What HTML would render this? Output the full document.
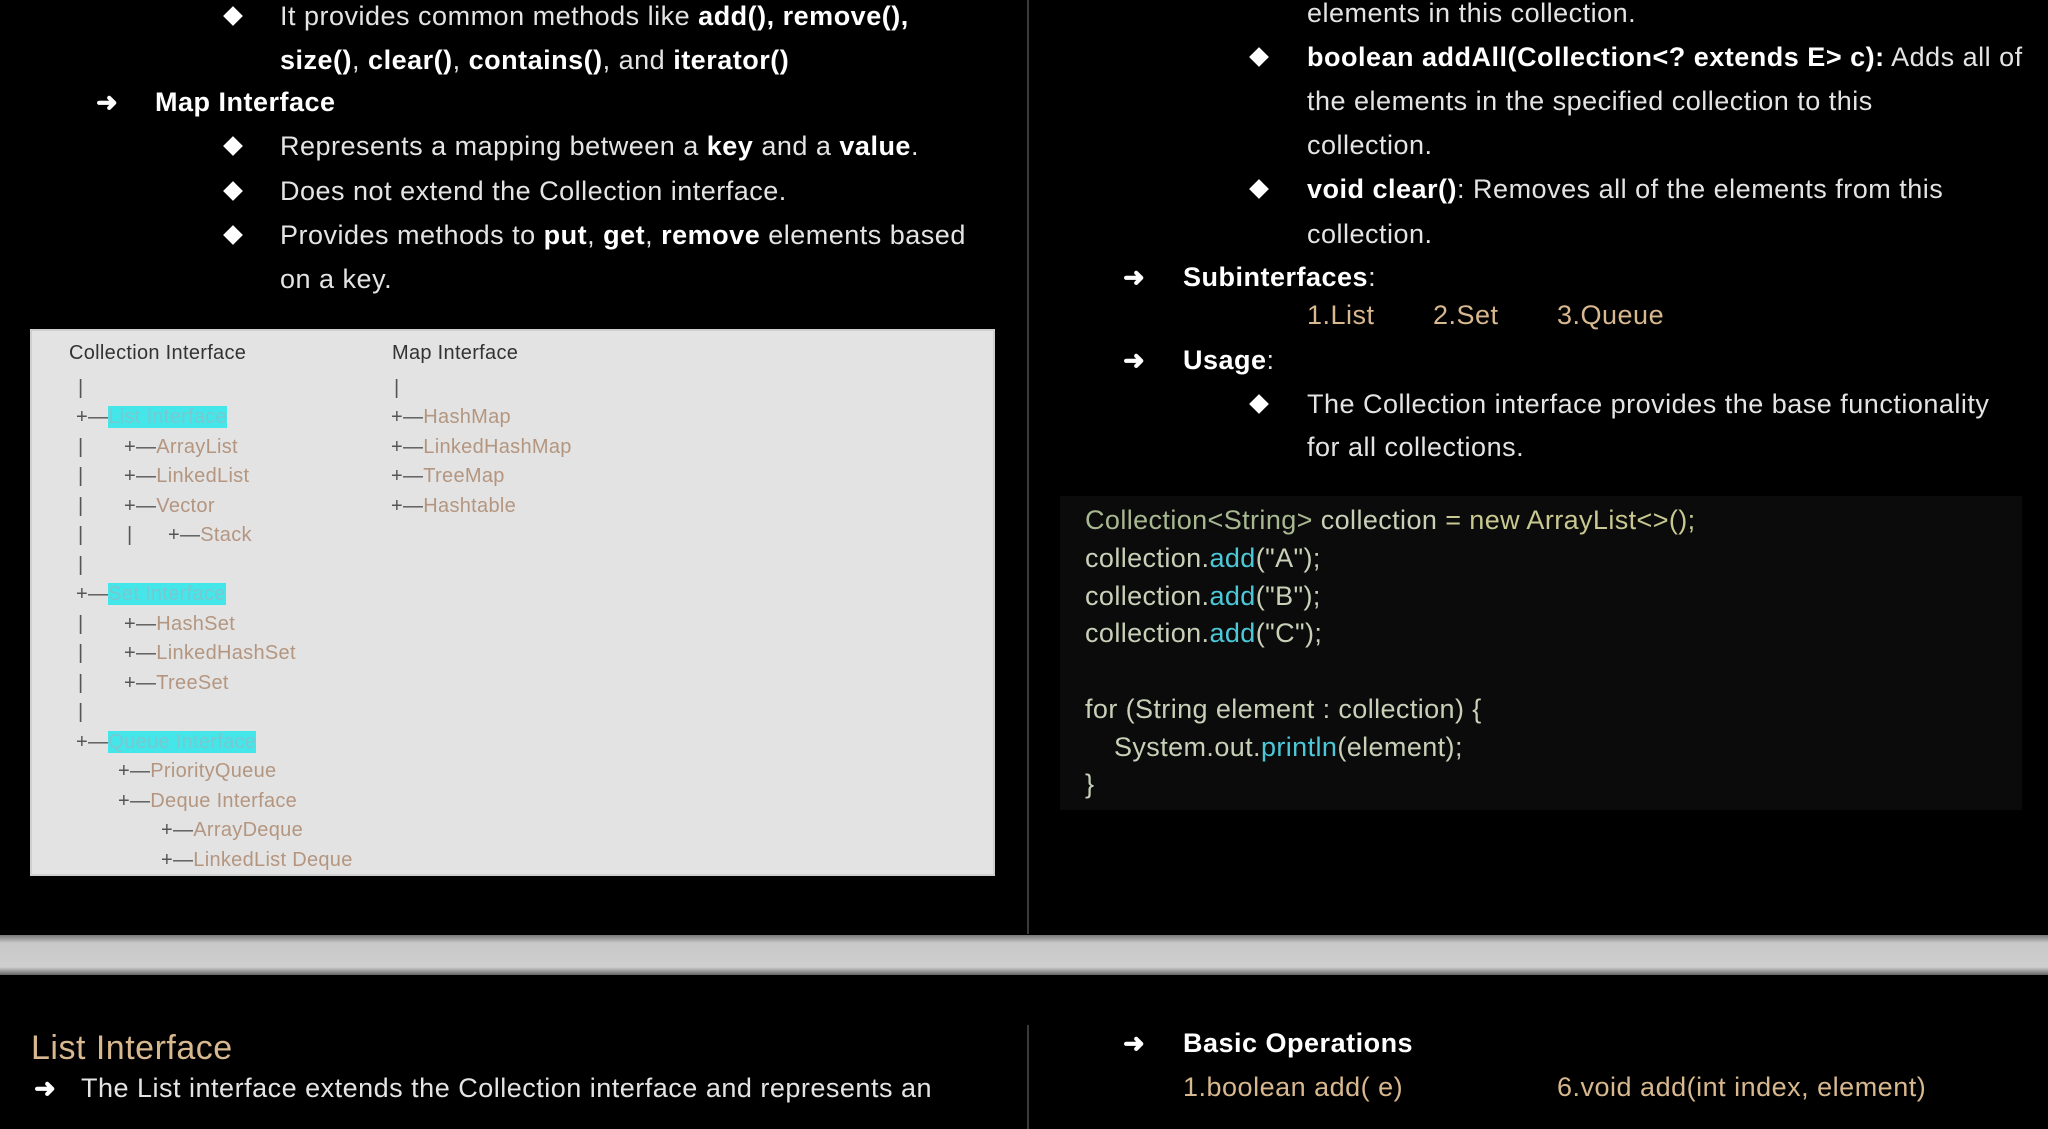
<!DOCTYPE html>
<html><head><meta charset="utf-8"><style>
*{margin:0;padding:0;box-sizing:border-box}
body{width:2048px;height:1129px;background:#000;overflow:hidden;position:relative;font-family:"Liberation Sans",sans-serif;color:#e4e4e4}
.t{position:absolute;font-size:27px;line-height:30px;white-space:nowrap;letter-spacing:0.5px}
b{color:#fff}
.d{position:absolute;width:14px;height:14px;background:#fff;transform:rotate(45deg)}
.a{position:absolute;font-size:26px;line-height:30px;color:#fff;font-weight:bold}
.tan{color:#d8b88e}
.tr{position:absolute;font-size:20px;line-height:22px;color:#b49680;white-space:nowrap;letter-spacing:0.3px}
.bar{color:#555}
.cy{background:#45e6ea;color:#78c8d0}
.c{position:absolute;font-size:27px;line-height:30px;white-space:nowrap;color:#c8d0b8;letter-spacing:0.4px}
</style></head><body>
<div class="d" style="left:226px;top:9px"></div>
<div class="t" style="left:280px;top:1px">It provides common methods like <b>add(), remove(),</b></div>
<div class="t" style="left:280px;top:45px"><b>size()</b>, <b>clear()</b>, <b>contains()</b>, and <b>iterator()</b></div>
<div class="a" style="left:96px;top:87px">➜</div>
<div class="t" style="left:155px;top:87px"><b>Map Interface</b></div>
<div class="d" style="left:226px;top:139px"></div>
<div class="t" style="left:280px;top:131px">Represents a mapping between a <b>key</b> and a <b>value</b>.</div>
<div class="d" style="left:226px;top:184px"></div>
<div class="t" style="left:280px;top:176px">Does not extend the Collection interface.</div>
<div class="d" style="left:226px;top:228px"></div>
<div class="t" style="left:280px;top:220px">Provides methods to <b>put</b>, <b>get</b>, <b>remove</b> elements based</div>
<div class="t" style="left:280px;top:264px">on a key.</div>

<div style="position:absolute;left:30px;top:329px;width:965px;height:547px;background:#e3e3e3;border:2px solid #cfcfcf"></div>
<div class="tr" style="left:69px;top:342px;color:#333">Collection Interface</div>
<div class="tr" style="left:392px;top:342px;color:#333">Map Interface</div>
<div class="tr bar" style="left:78px;top:377px">|</div>
<div class="tr" style="left:76px;top:406px"><span class="bar">+—</span><span class="cy">List Interface</span></div>
<div class="tr bar" style="left:78px;top:436px">|</div><div class="tr" style="left:124px;top:436px"><span class="bar">+—</span>ArrayList</div>
<div class="tr bar" style="left:78px;top:465px">|</div><div class="tr" style="left:124px;top:465px"><span class="bar">+—</span>LinkedList</div>
<div class="tr bar" style="left:78px;top:495px">|</div><div class="tr" style="left:124px;top:495px"><span class="bar">+—</span>Vector</div>
<div class="tr bar" style="left:78px;top:524px">|</div><div class="tr bar" style="left:127px;top:524px">|</div><div class="tr" style="left:168px;top:524px"><span class="bar">+—</span>Stack</div>
<div class="tr bar" style="left:78px;top:554px">|</div>
<div class="tr" style="left:76px;top:583px"><span class="bar">+—</span><span class="cy">Set Interface</span></div>
<div class="tr bar" style="left:78px;top:613px">|</div><div class="tr" style="left:124px;top:613px"><span class="bar">+—</span>HashSet</div>
<div class="tr bar" style="left:78px;top:642px">|</div><div class="tr" style="left:124px;top:642px"><span class="bar">+—</span>LinkedHashSet</div>
<div class="tr bar" style="left:78px;top:672px">|</div><div class="tr" style="left:124px;top:672px"><span class="bar">+—</span>TreeSet</div>
<div class="tr bar" style="left:78px;top:701px">|</div>
<div class="tr" style="left:76px;top:731px"><span class="bar">+—</span><span class="cy">Queue Interface</span></div>
<div class="tr" style="left:118px;top:760px"><span class="bar">+—</span>PriorityQueue</div>
<div class="tr" style="left:118px;top:790px"><span class="bar">+—</span>Deque Interface</div>
<div class="tr" style="left:161px;top:819px"><span class="bar">+—</span>ArrayDeque</div>
<div class="tr" style="left:161px;top:849px"><span class="bar">+—</span>LinkedList Deque</div>
<div class="tr bar" style="left:394px;top:377px">|</div>
<div class="tr" style="left:391px;top:406px"><span class="bar">+—</span>HashMap</div>
<div class="tr" style="left:391px;top:436px"><span class="bar">+—</span>LinkedHashMap</div>
<div class="tr" style="left:391px;top:465px"><span class="bar">+—</span>TreeMap</div>
<div class="tr" style="left:391px;top:495px"><span class="bar">+—</span>Hashtable</div>

<div style="position:absolute;left:1027px;top:0;width:2px;height:934px;background:#3a3a3a"></div>

<div class="t" style="left:1307px;top:-2px">elements in this collection.</div>
<div class="d" style="left:1252px;top:50px"></div>
<div class="t" style="left:1307px;top:42px"><b>boolean addAll(Collection&lt;? extends E&gt; c):</b> Adds all of</div>
<div class="t" style="left:1307px;top:86px">the elements in the specified collection to this</div>
<div class="t" style="left:1307px;top:130px">collection.</div>
<div class="d" style="left:1252px;top:182px"></div>
<div class="t" style="left:1307px;top:174px"><b>void clear()</b>: Removes all of the elements from this</div>
<div class="t" style="left:1307px;top:219px">collection.</div>
<div class="a" style="left:1123px;top:262px">➜</div>
<div class="t" style="left:1183px;top:262px"><b>Subinterfaces</b>:</div>
<div class="t tan" style="left:1307px;top:300px">1.List</div>
<div class="t tan" style="left:1433px;top:300px">2.Set</div>
<div class="t tan" style="left:1557px;top:300px">3.Queue</div>
<div class="a" style="left:1123px;top:345px">➜</div>
<div class="t" style="left:1183px;top:345px"><b>Usage</b>:</div>
<div class="d" style="left:1252px;top:397px"></div>
<div class="t" style="left:1307px;top:389px">The Collection interface provides the base functionality</div>
<div class="t" style="left:1307px;top:432px">for all collections.</div>

<div style="position:absolute;left:1060px;top:496px;width:962px;height:314px;background:#0b0b0b"></div>
<div class="c" style="left:1085px;top:505px"><span style="color:#a8b890">Collection&lt;String&gt;</span> collection <span style="color:#c8c890">= new ArrayList&lt;&gt;();</span></div>
<div class="c" style="left:1085px;top:543px">collection.<span style="color:#4cc8d8">add</span>("A");</div>
<div class="c" style="left:1085px;top:581px">collection.<span style="color:#4cc8d8">add</span>("B");</div>
<div class="c" style="left:1085px;top:618px">collection.<span style="color:#4cc8d8">add</span>("C");</div>
<div class="c" style="left:1085px;top:694px">for (String element : collection) {</div>
<div class="c" style="left:1114px;top:732px">System.out.<span style="color:#4cc8d8">println</span>(element);</div>
<div class="c" style="left:1085px;top:769px">}</div>

<div style="position:absolute;left:0;top:935px;width:2048px;height:40px;background:linear-gradient(#777,#c8c8c8 20%,#cfcfcf 80%,#666)"></div>

<div style="position:absolute;left:1027px;top:1025px;width:2px;height:104px;background:#3a3a3a"></div>
<div class="t tan" style="left:31px;top:1030px;font-size:34px;line-height:36px">List Interface</div>
<div class="a" style="left:34px;top:1073px">➜</div>
<div class="t" style="left:81px;top:1073px">The List interface extends the Collection interface and represents an</div>
<div class="a" style="left:1123px;top:1028px">➜</div>
<div class="t" style="left:1183px;top:1028px"><b>Basic Operations</b></div>
<div class="t tan" style="left:1183px;top:1072px">1.boolean add( e)</div>
<div class="t tan" style="left:1557px;top:1072px">6.void add(int index, element)</div>
</body></html>
